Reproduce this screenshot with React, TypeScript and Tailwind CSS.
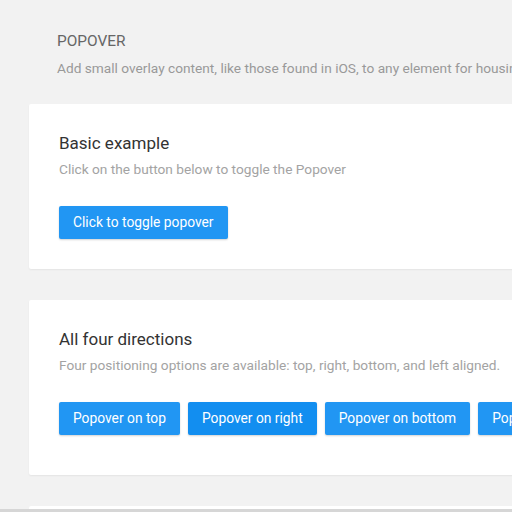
import React from 'react';

const buttonClass =
  'h-[33px] px-[14px] rounded-[2px] text-white text-[13.8px] leading-[33px] whitespace-nowrap shadow-[0_1px_2px_rgba(0,0,0,0.18)]';

const Card: React.FC<{ title: string; text: string; pb: string; gap: string; children: React.ReactNode }> = ({
  title,
  text,
  pb,
  gap,
  children,
}) => (
  <section className={`bg-white rounded-[2px] shadow-[0_1px_2px_rgba(0,0,0,0.06)] pl-[30px] pt-[27px] ${pb}`}>
    <h2 className="text-[17px] leading-[24px] text-[#333]">{title}</h2>
    <p className={`text-[13.7px] leading-[20px] text-[#a3a3a3] whitespace-nowrap ${gap}`}>{text}</p>
    <div className="mt-[27px] flex gap-2">{children}</div>
  </section>
);

const App: React.FC = () => {
  return (
    <div className="h-[512px] w-[512px] overflow-hidden flex flex-col bg-[#f2f2f2]" style={{ fontFamily: 'Roboto, sans-serif' }}>
      <div className="flex-1 overflow-hidden">
        <div className="w-[900px] pl-[29px]">
          {/* Header */}
          <header className="pl-[28px] pt-[31px]">
            <h1 className="text-[15.4px] leading-[20px] text-[#666]">POPOVER</h1>
            <p className="mt-[7px] text-[13.7px] leading-[20px] text-[#999] whitespace-nowrap">
              Add small overlay content, like those found in iOS, to any element for housing secondary information.
            </p>
          </header>

          <div className="mt-[26px] flex flex-col gap-[31px]">
            <Card
              title="Basic example"
              text="Click on the button below to toggle the Popover"
              pb="pb-[30px]"
              gap="mt-[4px]"
            >
              <button className={`${buttonClass} bg-[#2196f3]`}>Click to toggle popover</button>
            </Card>

            <Card
              title="All four directions"
              text="Four positioning options are available: top, right, bottom, and left aligned."
              pb="pb-[40px]"
              gap="mt-[4px]"
            >
              <button className={`${buttonClass} bg-[#2196f3]`}>Popover on top</button>
              <button className={`${buttonClass} bg-[#128ef0]`}>Popover on right</button>
              <button className={`${buttonClass} bg-[#2196f3]`}>Popover on bottom</button>
              <button className={`${buttonClass} bg-[#2196f3]`}>Popover on left</button>
            </Card>

            <section className="bg-white rounded-[2px] h-[120px]" />
          </div>
        </div>
      </div>
      <div className="h-[3px] bg-[#d6d6d6]" />
    </div>
  );
};

export default App;
